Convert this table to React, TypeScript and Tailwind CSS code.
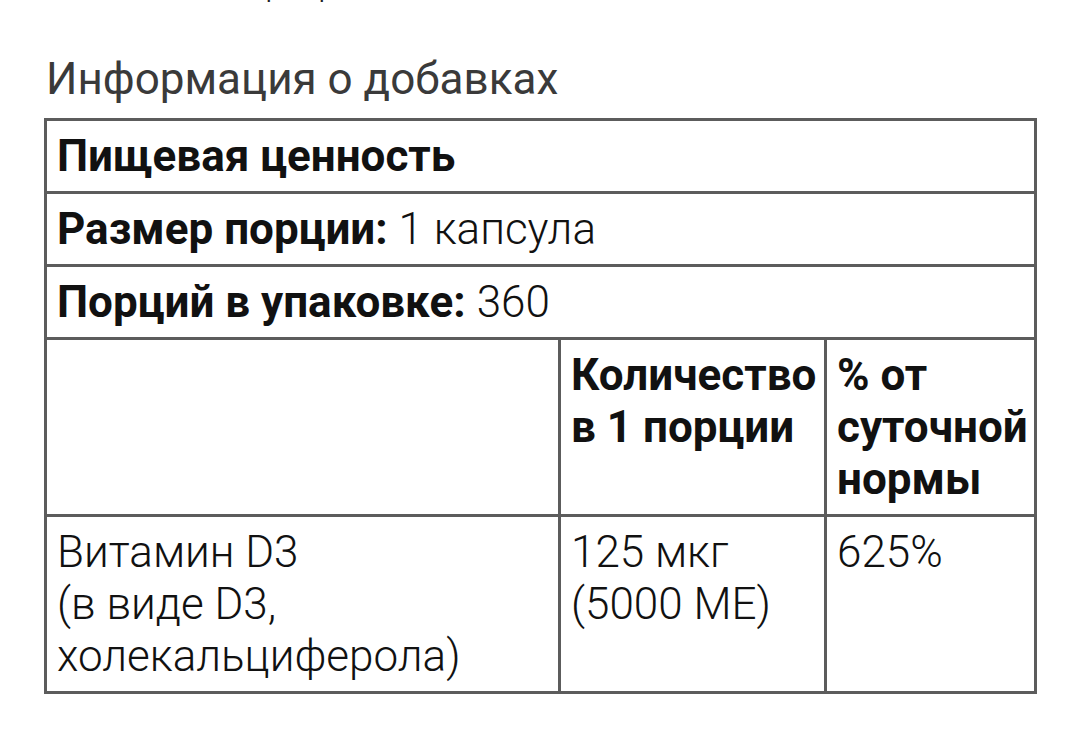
import React from "react";

const font = { fontFamily: "Roboto, 'Noto Sans', sans-serif" };

function Cell({
  children,
  className = "",
  colSpan,
}: {
  children?: React.ReactNode;
  className?: string;
  colSpan?: number;
}) {
  return (
    <td
      colSpan={colSpan}
      className={
        "border-[3px] border-[#5c5c5c] px-[10px] py-[9px] align-top text-[44px] leading-[52px] text-[#111] " +
        className
      }
    >
      {children}
    </td>
  );
}

export default function App() {
  return (
    <div className="w-[1080px] h-[741px] bg-white overflow-hidden" style={font}>
      {/* tail of the line above, cut by the screen edge */}
      <div className="h-[5px] overflow-hidden">
        <div className="-mt-[38px] flex text-[36px] leading-[40px] text-[#222] font-light">
          <span className="ml-[265px]">р</span>
          <span className="ml-[33px]">р</span>
          <span className="ml-[31px]">д</span>
        </div>
      </div>

      <div className="pl-[46px] pt-[48px] pb-[13px] text-[44px] leading-[52px] text-[#3a3a3a]">
        Информация о добавках
      </div>

      <table className="ml-[44px] w-[990px] table-fixed border-collapse">
        <colgroup>
          <col className="w-[514px]" />
          <col className="w-[266px]" />
          <col className="w-[210px]" />
        </colgroup>
        <tbody>
          <tr>
            <Cell colSpan={3} className="font-bold">
              Пищевая ценность
            </Cell>
          </tr>
          <tr>
            <Cell colSpan={3}>
              <span className="font-bold">Размер порции:</span>{" "}
              <span className="font-light">1 капсула</span>
            </Cell>
          </tr>
          <tr>
            <Cell colSpan={3}>
              <span className="font-bold">Порций в упаковке:</span>{" "}
              <span className="font-light">360</span>
            </Cell>
          </tr>
          <tr>
            <Cell />
            <Cell className="font-bold">
              Количество
              <br />в 1 порции
            </Cell>
            <Cell className="font-bold">
              % от
              <br />
              суточной
              <br />
              нормы
            </Cell>
          </tr>
          <tr>
            <Cell className="font-light">
              Витамин D3
              <br />
              (в виде D3,
              <br />
              холекальциферола)
            </Cell>
            <Cell className="font-light">
              125 мкг
              <br />
              (5000 МЕ)
            </Cell>
            <Cell className="font-light">625%</Cell>
          </tr>
        </tbody>
      </table>
    </div>
  );
}
